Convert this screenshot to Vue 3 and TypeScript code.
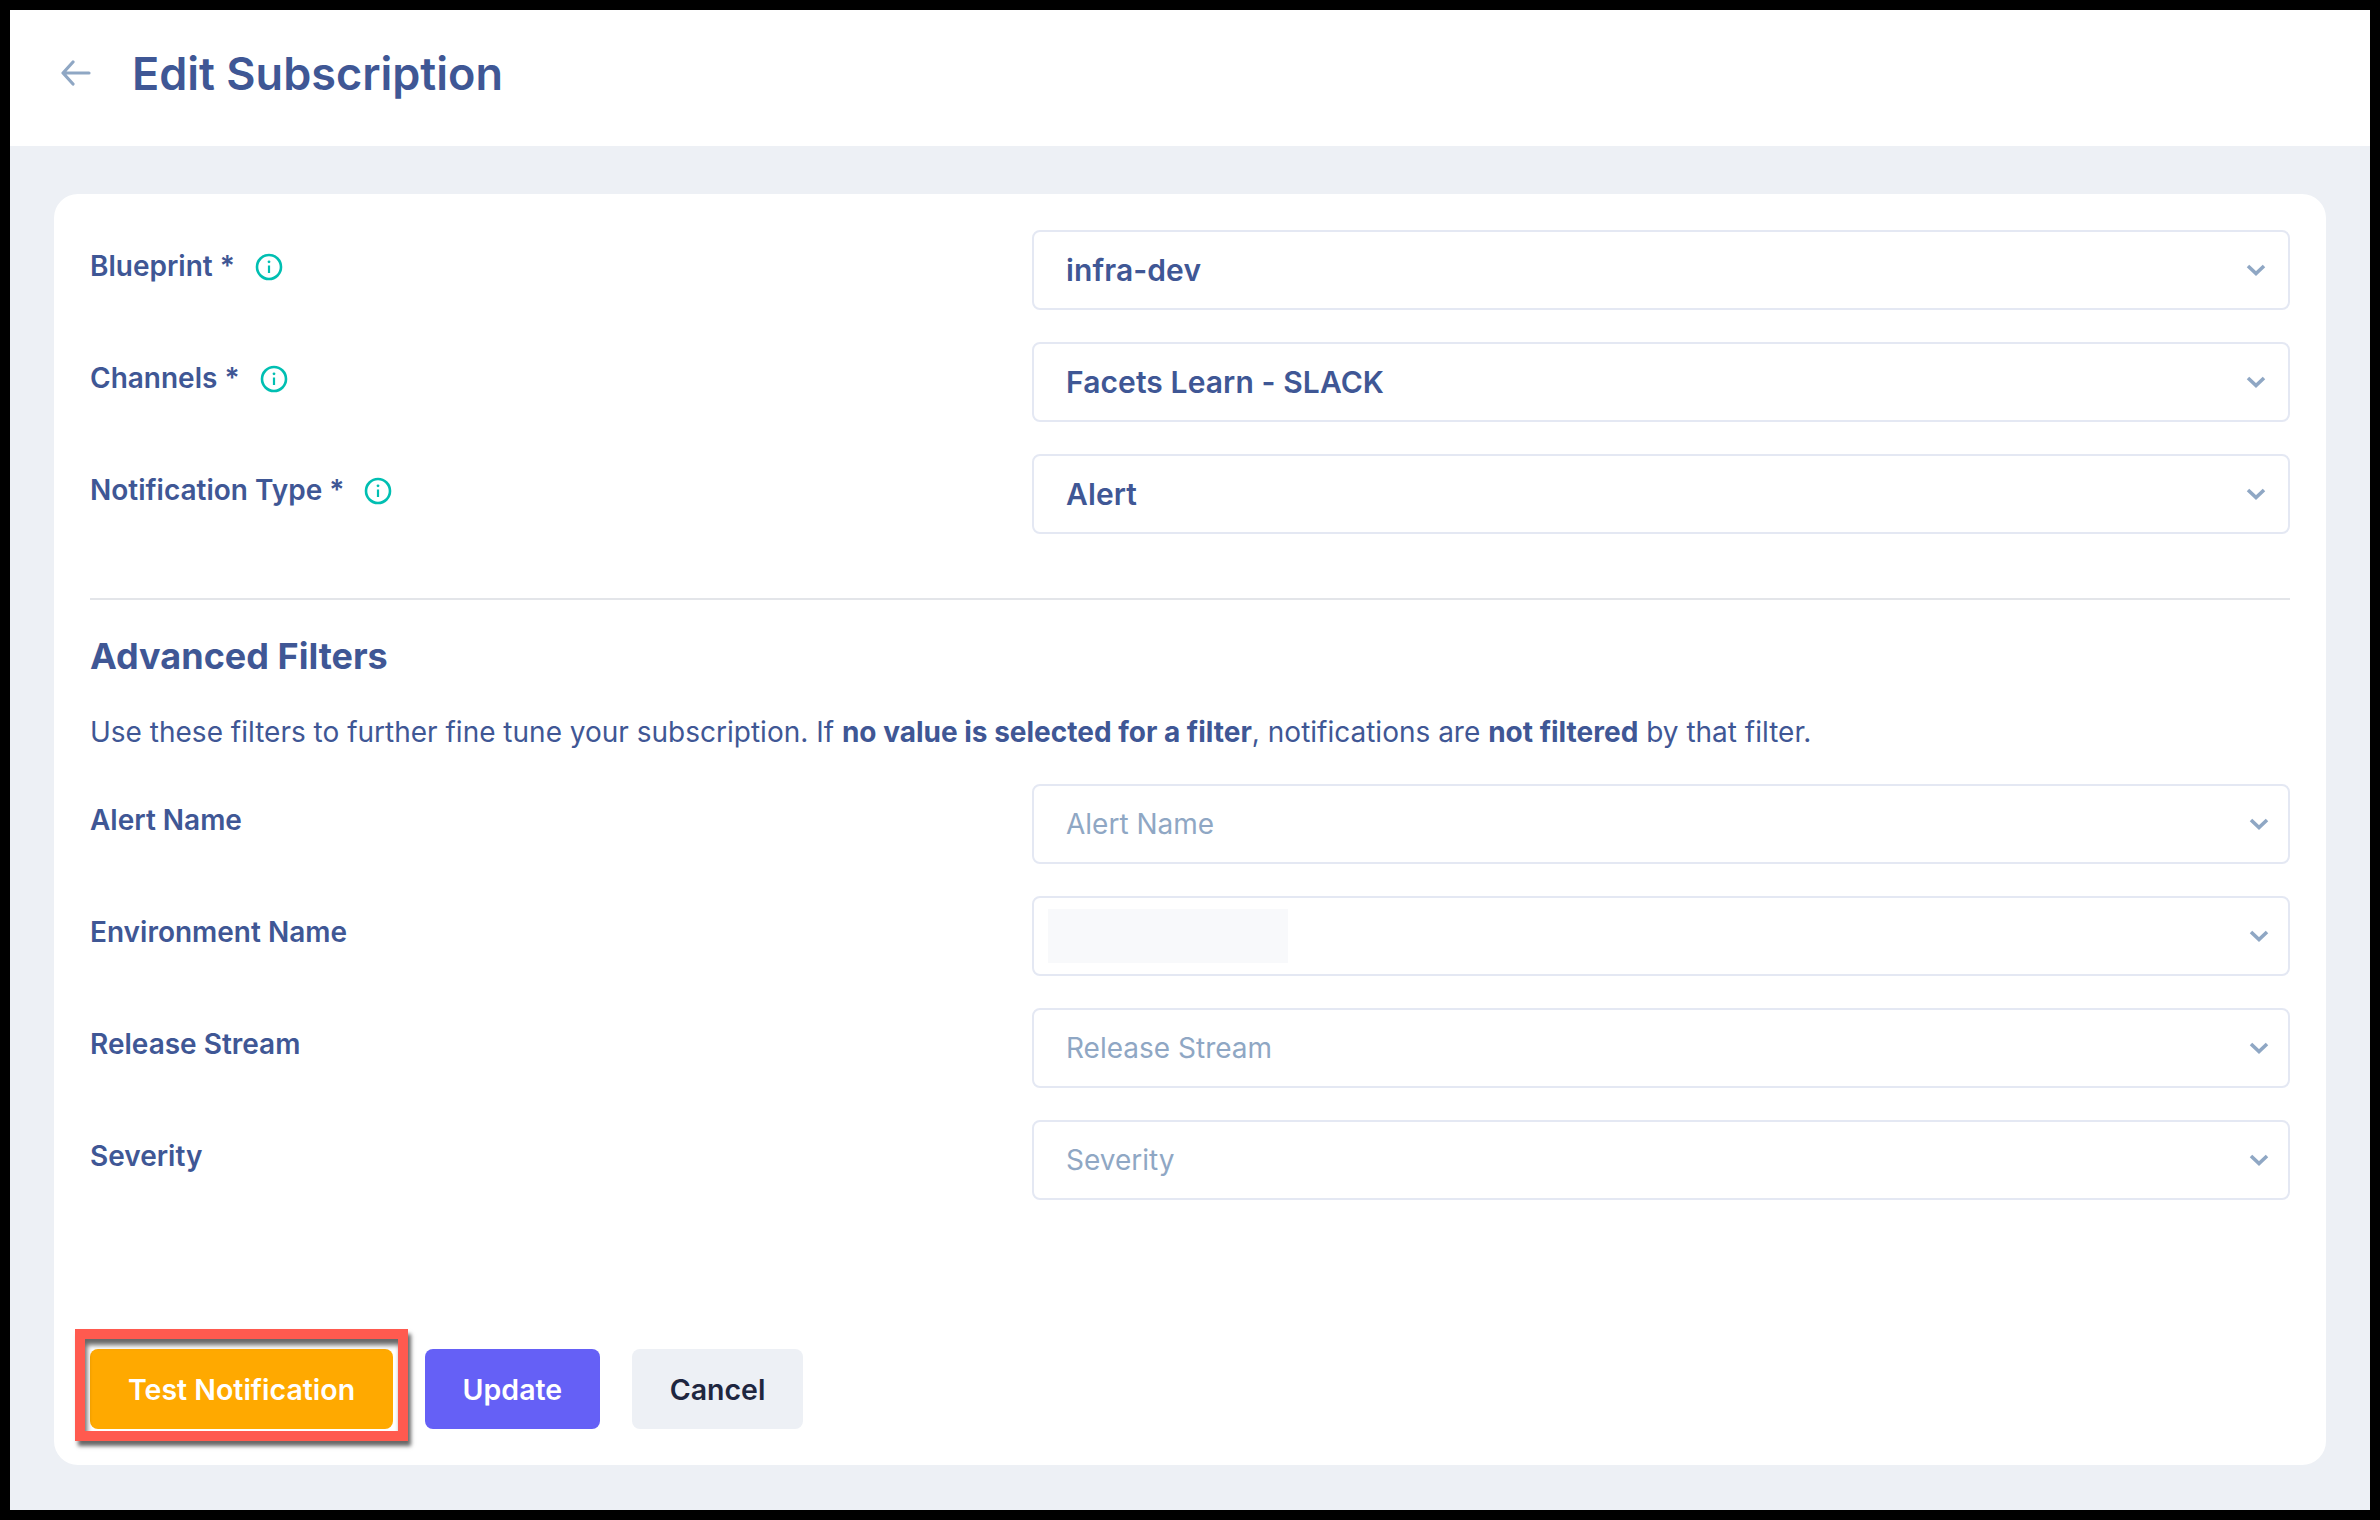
<script setup lang="ts">
interface Field { label: string; value?: string; placeholder?: string; info?: boolean; blurred?: boolean }
const primary: Field[] = [
  { label: 'Blueprint *', value: 'infra-dev', info: true },
  { label: 'Channels *', value: 'Facets Learn - SLACK', info: true },
  { label: 'Notification Type *', value: 'Alert', info: true },
]
const advanced: Field[] = [
  { label: 'Alert Name', placeholder: 'Alert Name' },
  { label: 'Environment Name', blurred: true },
  { label: 'Release Stream', placeholder: 'Release Stream' },
  { label: 'Severity', placeholder: 'Severity' },
]
</script>

<template>
  <div class="frame">
    <header class="top">
      <svg class="back" width="30" height="26" viewBox="0 0 30 26" fill="none">
        <path d="M28 13H3M12 2 2 13l10 11" stroke="#8fa7c4" stroke-width="3.2" stroke-linecap="round" stroke-linejoin="round" />
      </svg>
      <h1 class="title">Edit Subscription</h1>
    </header>
    <main class="body">
      <section class="card">
        <div class="rows">
          <div v-for="f in primary" :key="f.label" class="row">
            <div class="label">
              <span>{{ f.label }}</span>
              <svg class="info" width="28" height="28" viewBox="0 0 28 28" fill="none">
                <circle cx="14" cy="14" r="12" stroke="#00bfb2" stroke-width="2.6" />
                <path d="M14 12.5V20" stroke="#00bfb2" stroke-width="2.2" />
                <circle cx="14" cy="8.8" r="1.4" fill="#00bfb2" />
              </svg>
            </div>
            <div class="select">
              <span class="value">{{ f.value }}</span>
              <svg class="chev" width="20" height="12" viewBox="0 0 20 12" fill="none">
                <path d="M2 2l8 7.5L18 2" stroke="#8fa7c4" stroke-width="3.6" />
              </svg>
            </div>
          </div>
        </div>
        <hr class="divider" />
        <h2 class="heading">Advanced Filters</h2>
        <p class="desc">
          Use these filters to further fine tune your subscription. If <b>no value is selected for a filter</b>,
          notifications are <b>not filtered</b> by that filter.
        </p>
        <div class="rows">
          <div v-for="f in advanced" :key="f.label" class="row">
            <div class="label"><span>{{ f.label }}</span></div>
            <div class="select adv">
              <span v-if="f.blurred" class="blur"></span>
              <span v-else class="placeholder">{{ f.placeholder }}</span>
              <svg class="chev" width="20" height="12" viewBox="0 0 20 12" fill="none">
                <path d="M2 2l8 7.5L18 2" stroke="#8fa7c4" stroke-width="3.6" />
              </svg>
            </div>
          </div>
        </div>
        <div class="actions">
          <div class="test-wrap">
            <button class="btn test">Test Notification</button>
            <span class="mark"></span>
          </div>
          <button class="btn update">Update</button>
          <button class="btn cancel">Cancel</button>
        </div>
      </section>
    </main>
  </div>
</template>

<style>
html, body { margin: 0; background: #000; }
</style>

<style scoped>
* { box-sizing: border-box; }
.frame {
  width: 2380px;
  height: 1520px;
  padding: 10px;
  background: #000;
  display: flex;
  flex-direction: column;
  font-family: Inter, "Liberation Sans", sans-serif;
  color: #3f5795;
}
.top {
  height: 136px;
  background: #fff;
  display: flex;
  align-items: center;
  gap: 41px;
  padding: 0 0 10px 51px;
  flex: none;
}
.back { flex: none; }
.title { margin: 0; font-size: 45px; font-weight: 600; line-height: 1; }
.body {
  flex: 1;
  background: #edf0f5;
  padding: 48px 44px 45px;
  display: flex;
}
.card {
  flex: 1;
  background: #fff;
  border-radius: 24px;
  padding: 36px;
  display: flex;
  flex-direction: column;
}
.rows { display: flex; flex-direction: column; gap: 32px; }
.row { display: grid; grid-template-columns: 942px 1fr; }
.label {
  display: flex;
  align-items: center;
  gap: 20px;
  height: 34px;
  margin-top: 19px;
  font-size: 28px;
  font-weight: 600;
  line-height: 34px;
}
.info { flex: none; margin-top: 2px; }
.select {
  height: 80px;
  border: 2px solid #e4e8f3;
  border-radius: 8px;
  display: flex;
  align-items: center;
  justify-content: space-between;
  padding: 0 22px 0 32px;
  font-size: 30px;
}
.select.adv { padding-right: 19px; }
.value { font-weight: 600; letter-spacing: 0.1px; }
.placeholder { color: #8fa7c4; font-size: 28px; }
.blur { width: 240px; height: 54px; margin-left: -18px; background: #f8f9fb; }
.chev { flex: none; }
.divider {
  margin: 64px 0 0;
  height: 2px;
  border: 0;
  background: #e3e5e9;
}
.heading { margin: 34px 0 0; font-size: 36px; font-weight: 700; line-height: 44px; }
.desc { margin: 34px 0 0; font-size: 28px; line-height: 40px; height: 72px; }
.desc b { font-weight: 700; }
.actions { display: flex; gap: 32px; margin-top: auto; }
.test-wrap { position: relative; display: flex; }
.btn {
  height: 80px;
  border: 0;
  border-radius: 8px;
  padding: 0 38px;
  font-family: inherit;
  font-size: 28.5px;
  font-weight: 600;
}
.test { background: #ffa900; color: #fff; }
.update { background: #6560f6; color: #fff; padding: 0 37.5px; }
.cancel { background: #edf0f5; color: #1e2640; }
.mark {
  position: absolute;
  left: -15px;
  right: -15px;
  top: -20px;
  bottom: -12px;
  border: 10px solid #ff5a4f;
  box-shadow: 3px 5px 4px rgba(0, 0, 0, 0.6), inset 2px 6px 5px rgba(0, 0, 0, 0.6);
  pointer-events: none;
}
</style>
